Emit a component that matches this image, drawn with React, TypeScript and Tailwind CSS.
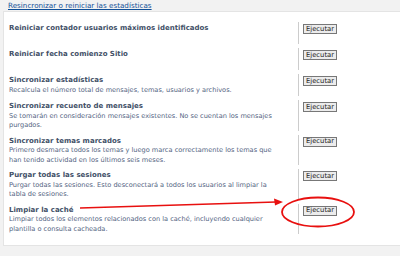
import React from "react";

type Row = { title: string; lines: string[] };

const rows: Row[] = [
  { title: "Reiniciar contador usuarios máximos identificados", lines: [] },
  { title: "Reiniciar fecha comienzo Sitio", lines: [] },
  {
    title: "Sincronizar estadísticas",
    lines: ["Recalcula el número total de mensajes, temas, usuarios y archivos."],
  },
  {
    title: "Sincronizar recuento de mensajes",
    lines: [
      "Se tomarán en consideración mensajes existentes. No se cuentan los mensajes",
      "purgados.",
    ],
  },
  {
    title: "Sincronizar temas marcados",
    lines: [
      "Primero desmarca todos los temas y luego marca correctamente los temas que",
      "han tenido actividad en los últimos seis meses.",
    ],
  },
  {
    title: "Purgar todas las sesiones",
    lines: [
      "Purgar todas las sesiones. Esto desconectará a todos los usuarios al limpiar la",
      "tabla de sesiones.",
    ],
  },
  {
    title: "Limpiar la caché",
    lines: [
      "Limpiar todos los elementos relacionados con la caché, incluyendo cualquier",
      "plantilla o consulta cacheada.",
    ],
  },
];

export default function App() {
  return (
    <div
      className="relative w-[400px] h-[256px] overflow-hidden bg-[#f2f2f2]"
      style={{ fontFamily: '"DejaVu Sans", Verdana, sans-serif' }}
    >
      <div className="h-[11px] pl-[8px] text-[7.2px] leading-[10px] text-[#115098] underline pt-[1px] whitespace-nowrap">
        Resincronizar o reiniciar las estadísticas
      </div>
      <div className="ml-[3px] h-[235px] bg-white border border-[#e4e4e4] border-r-0 pt-[10px] flex flex-col gap-[4px]">
        {rows.map((r, i) => (
          <div key={i} className="flex min-h-[22px]">
            <div className="w-[294px] pl-[5px] pt-[2px] leading-[9.5px] whitespace-nowrap">
              <div className="font-bold text-[7px] text-[#425067]">{r.title}</div>
              {r.lines.map((l, j) => (
                <div key={j} className="text-[6.6px] text-[#536482]">
                  {l}
                </div>
              ))}
            </div>
            <div className="border-l border-[#cccccc] pl-[4px] pt-[2px]">
              <div className="w-[34px] h-[10px] bg-[#ececec] border border-[#777] flex items-center justify-center text-[6.8px] text-[#222] leading-none">
                Ejecutar
              </div>
            </div>
          </div>
        ))}
      </div>
      <svg
        className="absolute left-0 top-0"
        width="400"
        height="256"
        viewBox="0 0 400 256"
      >
        <line x1="80" y1="208" x2="276" y2="202" stroke="#e8100f" strokeWidth="1.6" />
        <polygon points="283,202 274,198.5 275,205.5" fill="#e8100f" />
        <ellipse cx="318" cy="212" rx="36" ry="14.5" fill="none" stroke="#e8100f" strokeWidth="1.8" />
      </svg>
    </div>
  );
}
